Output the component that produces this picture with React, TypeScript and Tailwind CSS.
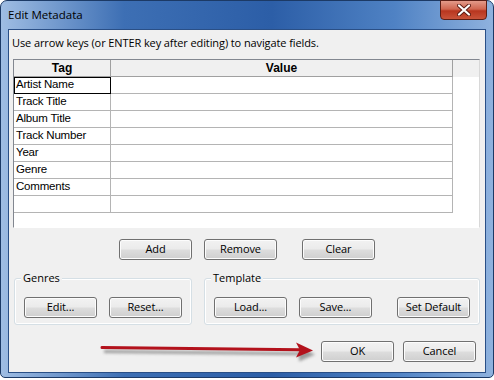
import React from 'react'

const rows = ['Artist Name', 'Track Title', 'Album Title', 'Track Number', 'Year', 'Genre', 'Comments', '']

const uiFont = { fontFamily: '"Open Sans", "Noto Sans", sans-serif' }

function Btn({ label, className = '' }: { label: string; className?: string }) {
  return (
    <div
      className={`h-[21px] w-[73px] flex items-center justify-center rounded-[3px] border border-[#707070] bg-[linear-gradient(180deg,#f2f2f2_0%,#ebebeb_48%,#dddddd_52%,#cfcfcf_100%)] text-[11px] tracking-[-0.1px] text-black shadow-[inset_0_0_0_1px_#fcfcfc] ${className}`}
    >
      {label}
    </div>
  )
}

function Group({ title, children, className = '' }: { title: string; children: React.ReactNode; className?: string }) {
  return (
    <div className={`relative h-[47px] rounded-[3px] border border-[#d5dfe5] shadow-[inset_0_0_0_1px_#ffffff] ${className}`}>
      <span className="absolute left-[6px] top-[-9px] bg-[#f0f0f0] px-[2px] text-[11px] leading-[16px] text-black">{title}</span>
      <div className="flex items-center h-full pt-[11px] pl-[9px]">{children}</div>
    </div>
  )
}

export default function App() {
  return (
    <div className="w-[494px] h-[380px] bg-white relative" style={uiFont}>
      {/* Window frame */}
      <div className="w-[494px] h-[378px] rounded-t-[7px] rounded-b-[5px] border border-[#1c3a66] bg-[linear-gradient(90deg,#9fbde3_0%,#3d6fb4_25%,#2c5ea7_55%,#4f82c4_80%,#8fb2de_100%)] flex flex-col">
        {/* Title bar */}
        <div className="h-[28px] flex items-start justify-between">
          <span className="pl-[7px] pt-[6px] text-[11.5px] leading-[16px] text-black">Edit Metadata</span>
          <div className="mr-[6px] mt-[-1px] h-[20px] w-[47px] rounded-b-[4px] border border-[#5b1e16] bg-[linear-gradient(180deg,#e39a8a_0%,#d06650_45%,#b8361f_55%,#c9533a_100%)] flex items-center justify-center">
            <svg width="14" height="12" viewBox="0 0 14 12">
              <path d="M2 1.5 L12 10.5 M12 1.5 L2 10.5" stroke="#5a1a12" strokeWidth="4" strokeLinecap="round" />
              <path d="M2 1.5 L12 10.5 M12 1.5 L2 10.5" stroke="#ffffff" strokeWidth="2.2" strokeLinecap="round" />
            </svg>
          </div>
        </div>

        {/* Client area */}
        <div className="mx-[7px] h-[344px] border border-[#2a4f86] bg-[#f0f0f0] flex flex-col">
          <div className="pl-[3px] pt-[5px] text-[11px] leading-[16px] tracking-[-0.1px] text-black">
            Use arrow keys (or ENTER key after editing) to navigate fields.
          </div>

          {/* Grid */}
          <div
            className="ml-[4px] mt-[8px] w-[467px] h-[169px] bg-white border-t border-l border-[#828790] border-r border-r-[#d8d8d8] border-b border-b-[#ffffff]"
            style={{ fontFamily: '"Liberation Sans", Arial, sans-serif' }}
          >
            <div className="flex h-[17px] bg-[#f0f0f0]">
              <div className="w-[97px] h-[17px] border-r border-b border-[#a0a0a0] flex items-center justify-center text-[12px] font-bold">Tag</div>
              <div className="w-[342px] h-[17px] border-r border-b border-[#a0a0a0] flex items-center justify-center text-[12px] font-bold">Value</div>
            </div>
            {rows.map((r, i) => (
              <div key={i} className="flex h-[17px]">
                <div
                  className={`w-[97px] h-[17px] border-r border-b border-[#b4b4b4] flex items-center pl-[2px] text-[11.5px] tracking-[-0.2px] text-black ${
                    i === 0 ? 'outline outline-1 outline-black -outline-offset-1' : ''
                  }`}
                >
                  {r}
                </div>
                <div className="w-[342px] h-[17px] border-r border-b border-[#b4b4b4]" />
              </div>
            ))}
          </div>

          {/* Add / Remove / Clear */}
          <div className="flex mt-[11px] ml-[110px] gap-[12px]">
            <Btn label="Add" />
            <Btn label="Remove" />
            <Btn label="Clear" className="ml-[13px]" />
          </div>

          {/* Groups */}
          <div className="flex mt-[18px] ml-[5px] gap-[12px]">
            <Group title="Genres" className="w-[178px]">
              <Btn label="Edit..." />
              <Btn label="Reset..." className="ml-[12px]" />
            </Group>
            <Group title="Template" className="w-[276px]">
              <Btn label="Load..." />
              <Btn label="Save..." className="ml-[12px]" />
              <Btn label="Set Default" className="ml-[25px]" />
            </Group>
          </div>

          {/* OK / Cancel */}
          <div className="flex mt-[16px] ml-[312px] gap-[9px]">
            <Btn label="OK" className="h-[20px]" />
            <Btn label="Cancel" className="h-[20px]" />
          </div>
        </div>
      </div>

      {/* Red annotation arrow */}
      <svg className="absolute left-0 top-0 pointer-events-none" width="494" height="380">
        <defs>
          <filter id="sh" x="-10%" y="-100%" width="120%" height="400%">
            <feGaussianBlur stdDeviation="1.5" />
          </filter>
        </defs>
        <g filter="url(#sh)" opacity="0.55" transform="translate(2,4)">
          <path d="M102 347.5 L300 349.8" stroke="#555" strokeWidth="3" />
          <path d="M297 342.5 L313 350.5 L297 357.5 Z" fill="#555" />
        </g>
        <path d="M102 347.5 L300 349.8" stroke="#b3121c" strokeWidth="3" strokeLinecap="round" />
        <path d="M296 342.5 L313 350.5 L296 357.5 L300 350 Z" fill="#b3121c" />
      </svg>
    </div>
  )
}
